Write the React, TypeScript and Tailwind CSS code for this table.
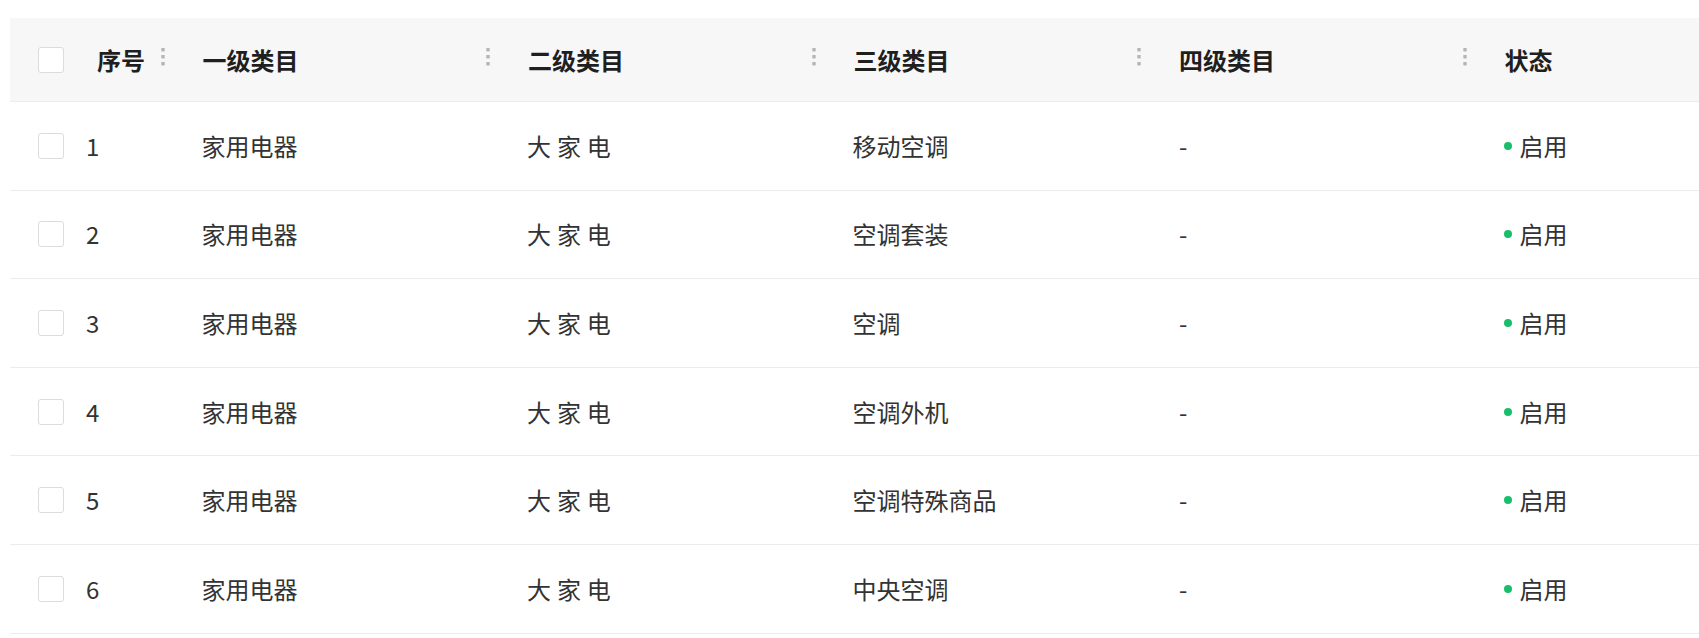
import React from "react";

const rows = [
  { id: 1, c3: "移动空调" },
  { id: 2, c3: "空调套装" },
  { id: 3, c3: "空调" },
  { id: 4, c3: "空调外机" },
  { id: 5, c3: "空调特殊商品" },
  { id: 6, c3: "中央空调" },
];

const gridCols = "grid grid-cols-[150.5px_325.5px_325.5px_325.5px_325.5px_1fr]";

function Dots() {
  return (
    <svg width="4" height="18" viewBox="0 0 4 18" className="mt-[-5px] shrink-0">
      <rect x="0.3" y="0" width="3.4" height="3.4" rx="0.6" fill="#b5b5b5" />
      <rect x="0.3" y="7" width="3.4" height="3.4" rx="0.6" fill="#b5b5b5" />
      <rect x="0.3" y="14" width="3.4" height="3.4" rx="0.6" fill="#b5b5b5" />
    </svg>
  );
}

function Checkbox() {
  return <div className="w-[26px] h-[26px] shrink-0 rounded-[3px] border-[1.5px] border-[#dcdcdc] bg-white" />;
}

function HeadCell({ label }: { label: string }) {
  return (
    <div className="flex items-center h-full">
      <Dots />
      <span className="ml-[38px]">{label}</span>
    </div>
  );
}

export default function App() {
  return (
    <div
      className="w-[1699px] h-[638px] bg-white overflow-hidden pt-[18px] pl-[10px]"
      style={{ fontFamily: '"Noto Sans CJK SC", "Noto Sans", sans-serif' }}
    >
      <div className="text-[24px] leading-none">
        <div className={`${gridCols} h-[84px] bg-[#f7f7f7] border-b border-[#ececec] font-bold text-[#1f1f1f]`}>
          <div className="flex items-center h-full pl-[28px]">
            <Checkbox />
            <span className="ml-[33px]">序号</span>
          </div>
          <HeadCell label="一级类目" />
          <HeadCell label="二级类目" />
          <HeadCell label="三级类目" />
          <HeadCell label="四级类目" />
          <HeadCell label="状态" />
        </div>
        {rows.map((r) => (
          <div key={r.id} className={`${gridCols} h-[88.6px] border-b border-[#ececec] text-[#333333]`}>
            <div className="flex items-center h-full pl-[28px]">
              <Checkbox />
              <span className="ml-[22px]">{r.id}</span>
            </div>
            <div className="flex items-center pl-[41px]">家用电器</div>
            <div className="flex items-center pl-[41px] [word-spacing:0.5px]">大 家 电</div>
            <div className="flex items-center pl-[41px]">{r.c3}</div>
            <div className="flex items-center pl-[42px]">-</div>
            <div className="flex items-center pl-[41px]">
              <span className="w-[8px] h-[8px] rounded-full bg-[#19be6b] mr-[8px]" />
              <span>启用</span>
            </div>
          </div>
        ))}
      </div>
    </div>
  );
}
